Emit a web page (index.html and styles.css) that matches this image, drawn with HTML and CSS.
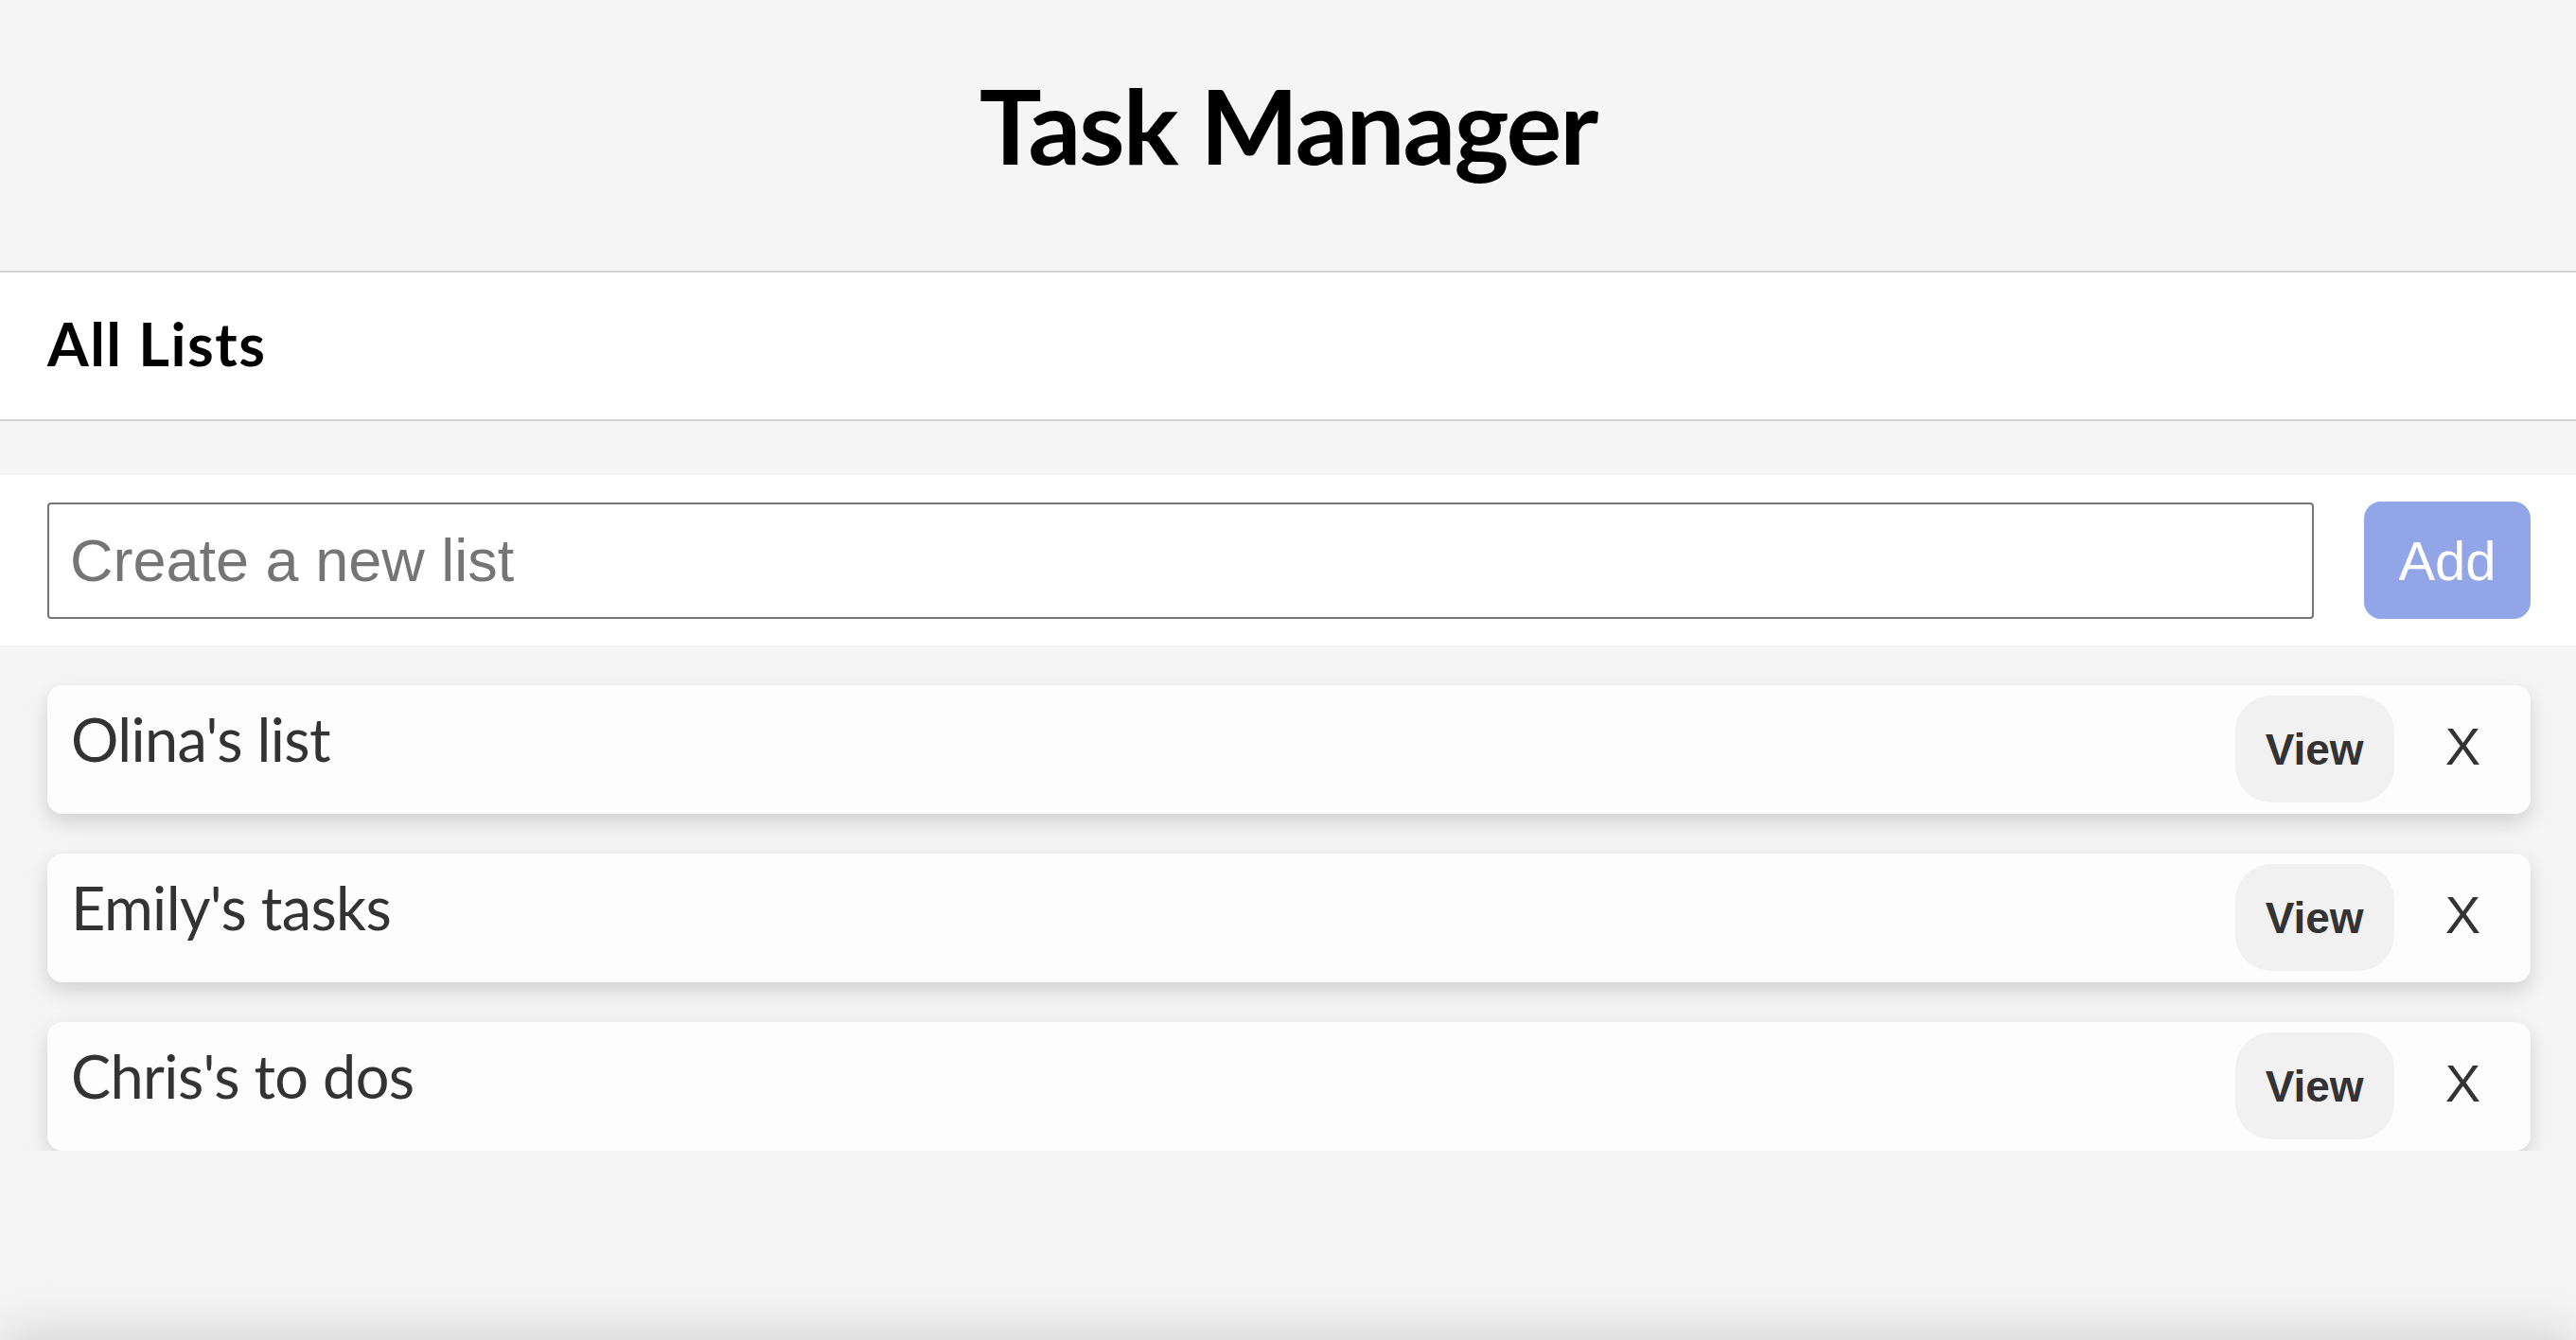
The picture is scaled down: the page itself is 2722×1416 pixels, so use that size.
FILE: index.html
```html
<!DOCTYPE html>
<html lang="en">
<head>
<meta charset="utf-8">
<title>Task Manager</title>
<link rel="stylesheet" href="styles.css">
</head>
<body>
<header class="app-header">
  <h1 class="app-title">Task Manager</h1>
</header>
<section class="lists-bar">
  <h2 class="lists-title">All Lists</h2>
</section>
<main class="content">
  <form class="new-list">
    <input class="new-list-input" type="text" placeholder="Create a new list">
    <button class="add-btn" type="button">Add</button>
  </form>
  <ul class="lists">
    <li class="list-item">
      <span class="list-name">Olina's list</span>
      <button class="view-btn" type="button">View</button>
      <button class="delete-btn" type="button">X</button>
    </li>
    <li class="list-item">
      <span class="list-name">Emily's tasks</span>
      <button class="view-btn" type="button">View</button>
      <button class="delete-btn" type="button">X</button>
    </li>
    <li class="list-item">
      <span class="list-name">Chris's to dos</span>
      <button class="view-btn" type="button">View</button>
      <button class="delete-btn" type="button">X</button>
    </li>
  </ul>
</main>
<div class="bottom-shadow"></div>
</body>
</html>
```
FILE: styles.css
```css
* {
  box-sizing: border-box;
}

html, body {
  margin: 0;
  padding: 0;
}

body {
  background: #f5f5f5;
  font-family: "Lato", "Open Sans", sans-serif;
  overflow: hidden;
}

.app-header {
  height: 288px;
  border-bottom: 2px solid #d4d4d4;
  display: flex;
  justify-content: center;
  padding-top: 76px;
}

.app-title {
  margin: 0;
  font-size: 110px;
  line-height: 1;
  font-weight: 700;
  letter-spacing: -2px;
  color: #000;
}

.lists-bar {
  background: #fff;
  height: 157px;
  border-bottom: 2px solid #d4d4d4;
  padding: 43px 50px 0;
}

.lists-title {
  margin: 0;
  font-size: 63px;
  line-height: 1;
  font-weight: 700;
  letter-spacing: 1.5px;
  color: #000;
}

.content {
  padding-top: 57px;
}

.new-list {
  margin: 0;
  background: #fff;
  display: flex;
  align-items: center;
  padding: 28px 48px 28px 50px;
  gap: 53px;
}

.new-list-input {
  flex: 1;
  height: 123px;
  border: 2px solid #767676;
  border-radius: 4px;
  padding: 0 22px;
  font-family: "Liberation Sans", Arial, sans-serif;
  font-size: 63px;
  color: #333;
  background: #fff;
}

.new-list-input::placeholder {
  color: #757575;
}

.add-btn {
  width: 176px;
  height: 124px;
  border: none;
  border-radius: 18px;
  background: #92a5e6;
  color: #fff;
  font-family: "Liberation Sans", Arial, sans-serif;
  font-size: 58px;
  padding: 0;
}

.lists {
  list-style: none;
  margin: 42px 0 0;
  padding: 0 48px 0 50px;
  display: flex;
  flex-direction: column;
  gap: 42px;
}

.list-item {
  display: flex;
  align-items: center;
  height: 136px;
  background: #fdfdfd;
  border-radius: 16px;
  padding: 11px 26px 12px 25px;
  box-shadow: 0 9px 22px rgba(0, 0, 0, 0.15);
}

.list-name {
  flex: 1;
  align-self: flex-start;
  margin-top: 14px;
  font-size: 63px;
  line-height: 1;
  letter-spacing: -0.6px;
  color: #333;
}

.view-btn {
  width: 168px;
  height: 113px;
  border: none;
  border-radius: 38px;
  background: #f1f1f1;
  color: #333;
  font-family: "Liberation Sans", Arial, sans-serif;
  font-weight: 700;
  font-size: 46px;
  padding: 0;
}

.delete-btn {
  margin: 0 0 6px 27px;
  padding: 0 27px;
  border: none;
  background: none;
  color: #333;
  font-family: "Liberation Sans", Arial, sans-serif;
  font-size: 56px;
  line-height: 1;
}

.bottom-shadow {
  position: fixed;
  left: 0;
  right: 0;
  top: 100vh;
  height: 100px;
  background: #f5f5f5;
  box-shadow: 0 0 60px rgba(0, 0, 0, 0.18);
}
```
